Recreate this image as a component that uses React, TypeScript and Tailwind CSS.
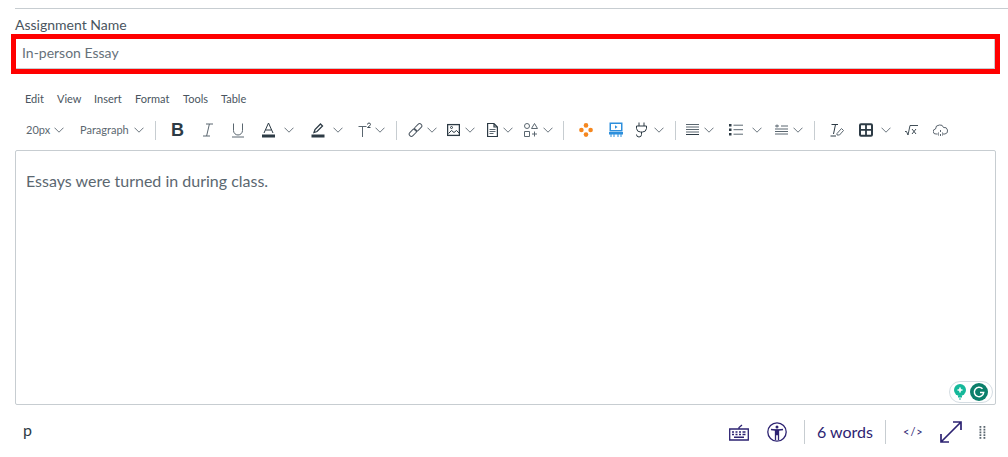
import React from "react";

const Chev = ({ className = "" }: { className?: string }) => (
  <svg viewBox="0 0 10 6" className={`w-[10px] h-[6px] shrink-0 ${className}`} fill="none" stroke="#5b6770" strokeWidth="0.9">
    <path d="M0.5 0.7 5 5.2 9.5 0.7" />
  </svg>
);
const Sep = ({ className = "" }: { className?: string }) => <div className={`w-px h-[19px] bg-[#c7cdd1] shrink-0 ${className}`} />;
const Ic = ({ w, className = "", children, vb }: { w: number; className?: string; vb: string; children: React.ReactNode }) => (
  <svg viewBox={vb} width={w} height={16} className={`shrink-0 ${className}`} fill="none" stroke="#2d3b45" strokeWidth="1">
    {children}
  </svg>
);

export default function App() {
  return (
    <div className="w-[1008px] h-[457px] bg-white overflow-hidden font-['Lato',sans-serif] text-[#2d3b45] pt-2">
      <div className="ml-[15px] h-px bg-[#c7cdd1]" />
      <div className="ml-[15px] mt-[7px] h-[17px] text-[14px] leading-[17px] text-[#4a5560]">Assignment Name</div>
      <div className="ml-[11px] mt-[1px] w-[989px] h-[40px] border-[5px] border-[#ff0000] bg-white">
        <div className="h-full border-b border-r border-[#c7cdd1] flex items-center pl-[6px] text-[14px] text-[#66717a] pb-[3px]">In-person Essay</div>
      </div>

      <div className="flex items-center h-[14px] mt-[18px] ml-[25px] text-[11px] leading-[14px] text-[#4a5560]">
        <span className="w-[32px]">Edit</span>
        <span className="w-[37px]">View</span>
        <span className="w-[41px]">Insert</span>
        <span className="w-[48px]">Format</span>
        <span className="w-[38px]">Tools</span>
        <span>Table</span>
      </div>

      <div className="flex items-center h-[20px] mt-[14px] text-[#5b6770]">
        <span className="ml-[26px] w-[28px] text-[11px]">20px</span>
        <Chev />
        <span className="ml-[16px] w-[54px] text-[11px]">Paragraph</span>
        <Chev />
        <Sep className="ml-[11px]" />
        <span className="ml-[15px] w-[14px] text-[18px] font-bold leading-none text-[#2d3b45] font-['Liberation_Sans',sans-serif]">B</span>
        <Ic w={12} vb="0 0 12 16" className="ml-[17px]">
          <path d="M4 2h7M1 14h7M7.400 2 4.600 14" stroke="#5b6770" />
        </Ic>
        <Ic w={14} vb="0 0 14 16" className="ml-[17px]">
          <path d="M2.500 1.500v7a4.500 4.500 0 0 0 9 0v-7M1 15h12" stroke="#5b6770" />
        </Ic>
        <Ic w={13} vb="0 0 13 16" className="ml-[17px]">
          <path d="M2 11 6.500 1 11 11M3.500 8h6" stroke="#2d3b45" />
          <rect x="0" y="12.500" width="13" height="3" fill="#2d3b45" stroke="none" />
        </Ic>
        <Chev className="ml-[9px]" />
        <Ic w={14} vb="0 0 14 16" className="ml-[17px]">
          <path d="M3 10.500 4 7.500 9.500 2l2 2L6 9.500z" stroke="#2d3b45" strokeWidth="1.300" />
          <rect x="0.500" y="12.500" width="13" height="3" fill="#2d3b45" stroke="none" />
        </Ic>
        <Chev className="ml-[8px]" />
        <Ic w={14} vb="0 0 14 16" className="ml-[15px]">
          <path d="M0.500 4.500H8.500M4.500 4.500V15" stroke="#5b6770" />
          <path d="M9.500 2.500q0-1.500 1.500-1.500t1.500 1.500q0 1-3 3h3" stroke="#2d3b45" strokeWidth="0.900" />
        </Ic>
        <Chev className="ml-[3px]" />
        <Sep className="ml-[11px]" />
        <Ic w={15} vb="0 0 15 16" className="ml-[11px]">
          <g stroke="#4a5560" strokeWidth="1">
            <rect x="-0.500" y="5.800" width="8.500" height="4.400" rx="2.200" transform="rotate(-45 7.500 8)" />
            <rect x="7" y="5.800" width="8.500" height="4.400" rx="2.200" transform="rotate(-45 7.500 8)" />
          </g>
        </Ic>
        <Chev className="ml-[4px]" />
        <Ic w={13} vb="0 0 13 16" className="ml-[10px]">
          <rect x="0.600" y="2.600" width="11.800" height="10.800" stroke="#2d3b45" strokeWidth="1.300" />
          <path d="M1.500 11.500 4.500 8.500 7 10.500l2.500-2L12 11" stroke="#2d3b45" />
          <circle cx="4.500" cy="5.500" r="1" stroke="#2d3b45" />
        </Ic>
        <Chev className="ml-[5px]" />
        <Ic w={11} vb="0 0 11 16" className="ml-[12px]">
          <path d="M0.600 1.500h6.400l3.400 3.500v9.500H0.600zM7 1.500V5h3.400" stroke="#2d3b45" strokeWidth="1.200" />
          <path d="M2.500 7.500h6M2.500 9.500h6M2.500 11.500h4" stroke="#5b6770" />
        </Ic>
        <Chev className="ml-[5px]" />
        <Ic w={14} vb="0 0 14 16" className="ml-[11px]">
          <circle cx="3" cy="4" r="2.500" stroke="#5b6770" />
          <path d="M10.500 1.500 13.500 6.500h-6zM0.500 9.500h5v5h-5zM10.500 9.500v5M8 12h5" stroke="#5b6770" />
        </Ic>
        <Chev className="ml-[5px]" />
        <Sep className="ml-[10px]" />
        <svg viewBox="0 0 14 14" width={14} height={14} className="ml-[15px] shrink-0" fill="#f5871f">
          <circle cx="7" cy="2.400" r="2.300" />
          <circle cx="2.400" cy="7" r="2.300" />
          <circle cx="11.600" cy="7" r="2.300" />
          <circle cx="7" cy="11.600" r="2.300" />
        </svg>
        <svg viewBox="0 0 14 16" width={14} height={16} className="ml-[16px] shrink-0">
          <path d="M0.500 0.500h13v9h-13z" fill="#2d8fdc" />
          <rect x="2" y="2" width="10" height="6" fill="#fff" />
          <path d="M6 3.200 8.500 5 6 6.800z" fill="#2d8fdc" />
          <path d="M0 10.500h14v1.500H0zM2 12v3M5 12v3M9 12v3M12 12v3" fill="#2d8fdc" stroke="#2d8fdc" />
        </svg>
        <Ic w={13} vb="0 0 13 16" className="ml-[12px]">
          <path d="M4 0.500v3.500M9 0.500v3.500M1.500 4h10v2.500a4 4 0 0 1-4 3.500h-2a4 4 0 0 1-4-3.500zM6.500 10v2.500a2.500 2.500 0 0 1-5 0" stroke="#2d3b45" />
        </Ic>
        <Chev className="ml-[6px]" />
        <Sep className="ml-[11px]" />
        <Ic w={13} vb="0 0 13 16" className="ml-[10px]">
          <path d="M0 2.500h13M0 5h13M0 7.500h13M0 10h13" stroke="#5b6770" />
          <path d="M0 12.500h13" stroke="#2d3b45" />
        </Ic>
        <Chev className="ml-[5px] w-[9px]" />
        <Ic w={14} vb="0 0 14 16" className="ml-[15px]">
          <rect x="0" y="2" width="2.500" height="2.500" fill="#2d3b45" stroke="none" />
          <rect x="0" y="6.500" width="2.500" height="2.500" fill="#2d3b45" stroke="none" />
          <rect x="0" y="11" width="2.500" height="2.500" fill="#2d3b45" stroke="none" />
          <path d="M4.500 3.200H14M4.500 7.700H14M4.500 12.200H14" stroke="#5b6770" />
        </Ic>
        <Chev className="ml-[9px] w-[9px]" />
        <Ic w={13} vb="0 0 13 16" className="ml-[13px]">
          <path d="M0 4h4M2 2.500v3M6 4h7M0 7h13M0 9.500h13M0 12h13" stroke="#5b6770" />
        </Ic>
        <Chev className="ml-[5px] w-[9px]" />
        <Sep className="ml-[11px]" />
        <Ic w={14} vb="0 0 14 16" className="ml-[15px]">
          <path d="M1.500 2.500H8M5.500 2.500 3.500 12M0.500 14H6" stroke="#2d3b45" />
          <path d="M7 11.500 11.500 6.500l2 2L9.500 13H7z" stroke="#5b6770" />
        </Ic>
        <svg viewBox="0 0 14 14" width={14} height={14} className="ml-[15px] shrink-0" fill="none" stroke="#2d3b45">
          <rect x="1" y="1.200" width="12" height="11.600" rx="1" strokeWidth="2" />
          <path d="M1 6.800h12M7 1v12" strokeWidth="1.800" />
        </svg>
        <Chev className="ml-[8px] w-[9px]" />
        <Ic w={13} vb="0 0 13 16" className="ml-[14px]">
          <path d="M0 9.500h1.500L3 13 5 3.500h8M7 7l4 5M11 7l-4 5" stroke="#2d3b45" strokeWidth="0.900" />
        </Ic>
        <Ic w={15} vb="0 0 15 16" className="ml-[15px]">
          <path d="M4 12H3a2.500 2.500 0 0 1-.5-5 4 4 0 0 1 4-4 3.500 3.500 0 0 1 4 2.500 3.300 3.300 0 0 1 1.500 6.500h-1.500M7.500 8v2M7.500 12v2M5.500 10.500q-1 1.500 0 3M9.500 10.500q1 1.500 0 3" stroke="#4a5560" strokeWidth="0.900" />
        </Ic>
      </div>

      <div className="relative ml-[15px] mt-[10px] w-[981px] h-[255px] border border-[#c7cdd1] rounded-[2px] pl-[10px] pt-[20px] text-[16px] leading-[20px] text-[#5b6770]">
        Essays were turned in during class.
        <div className="absolute right-[2px] bottom-[1px] w-[44px] h-[22px] bg-white border border-[#d5dde3] rounded-full flex items-center pl-[3px] gap-[3px]">
          <svg viewBox="0 0 14 16" width={14} height={16} className="shrink-0">
            <circle cx="7" cy="6" r="6" fill="#15b89a" />
            <path d="M5 11.500h4v2H5zM6 14.500h2v1H6z" fill="#15b89a" />
            <path d="M7 3.500v5M4.500 6h5" stroke="#fff" strokeWidth="1.600" />
          </svg>
          <svg viewBox="0 0 18 18" width={18} height={18} className="shrink-0">
            <circle cx="9" cy="9" r="9" fill="#0b7f6b" />
            <path d="M12.500 5.800A4.700 4.700 0 1 0 13.700 9.500H10" fill="none" stroke="#fff" strokeWidth="1.500" />
          </svg>
        </div>
      </div>

      <div className="flex items-center h-[24px] mt-[15px] text-[#2d2372]">
        <span className="ml-[23px] w-[706px] text-[16px] leading-none text-[#2d3b45] -translate-y-[2px]">p</span>
        <svg viewBox="0 0 20 17" width={20} height={17} className="shrink-0" fill="none" stroke="#2d2372">
          <path d="M0.700 5h18.600v11H0.700zM10 5V3.500L13 1" strokeWidth="1.300" />
          <path d="M3 8h2M6.500 8h2M10 8h2M13.500 8h3M3 10.500h2M6.500 10.500h2M10 10.500h2M13.500 10.500h3M5 13.300h10" strokeWidth="1.500" />
        </svg>
        <svg viewBox="0 0 20 20" width={20} height={20} className="ml-[18px] shrink-0" fill="none" stroke="#2d2372">
          <circle cx="10" cy="10" r="9.200" strokeWidth="1.300" />
          <circle cx="10" cy="5" r="1.500" fill="#2d2372" stroke="none" />
          <path d="M4 7.500 8 8h4l4-.5M8.500 8v10M11.500 8v10M8.500 8h3v4.500h-3z" strokeWidth="1.300" fill="#2d2372" />
        </svg>
        <Sep className="ml-[17px] h-[24px]" />
        <span className="ml-[12px] w-[56px] text-[16px] whitespace-nowrap">6 words</span>
        <Sep className="ml-[12px] h-[24px]" />
        <span className="ml-[17px] w-[19px] text-[11px] tracking-[1px] whitespace-nowrap">&lt;/&gt;</span>
        <svg viewBox="0 0 22 22" width={22} height={22} className="ml-[18px] shrink-0" fill="none" stroke="#2d2372" strokeWidth="1.700">
          <path d="M1 21 21 1M13 1h8v8M1 13v8h8" />
        </svg>
        <svg viewBox="0 0 6 13" width={7} height={13} className="ml-[17px] shrink-0" fill="#5b6770">
          {[0, 2.750, 5.500, 8.250, 11].map((y) => (
            <g key={y}>
              <rect x="0" y={y} width="1.800" height="1.800" />
              <rect x="4" y={y} width="1.800" height="1.800" />
            </g>
          ))}
        </svg>
      </div>
    </div>
  );
}
